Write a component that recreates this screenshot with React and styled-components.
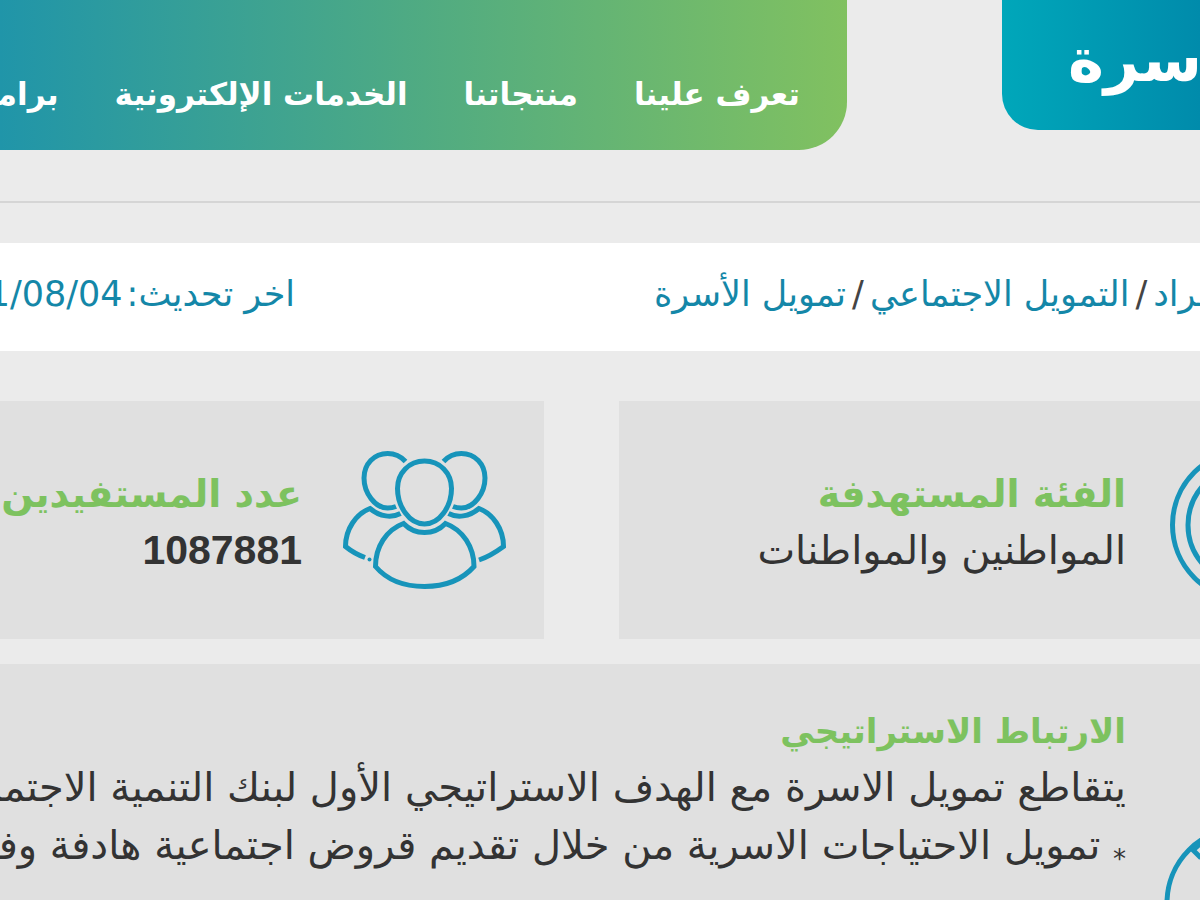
import React from "react";
import styled, { createGlobalStyle } from "styled-components";

const GlobalStyle = createGlobalStyle`
  *, *::before, *::after { box-sizing: border-box; }
  body {
    margin: 0;
    background: #ebebeb;
    color: #333;
    font-family: "DejaVu Sans", "Liberation Sans", sans-serif;
  }
`;

const Page = styled.div`
  overflow: hidden;
  min-height: 100vh;
  display: flex;
  flex-direction: column;
`;

const Header = styled.header`
  display: flex;
  align-items: flex-start;
  gap: 155px;
  padding-bottom: 51px;
  border-bottom: 2px solid #d5d5d5;
`;

const TitleTab = styled.div`
  flex: none;
  width: 198px;
  height: 130px;
  padding-left: 66px;
  display: flex;
  justify-content: flex-end;
  overflow: hidden;
  border-bottom-left-radius: 36px;
  background: linear-gradient(to right, #00a7ba, #008bab);
`;

const Title = styled.h1`
  flex: none;
  margin: 0;
  color: #fff;
  font-size: 61px;
  line-height: 120px;
  font-weight: 700;
  white-space: nowrap;
`;

const Nav = styled.nav`
  flex: 1;
  min-width: 0;
  height: 150px;
  padding: 66px 47px 0 0;
  display: flex;
  align-items: flex-start;
  gap: 56px;
  overflow: hidden;
  border-bottom-right-radius: 48px;
  background: linear-gradient(to right, #2095a9, #50ab82 50%, #81c160);
`;

const NavLink = styled.a`
  flex: none;
  color: #fff;
  font-size: 31px;
  line-height: 56px;
  font-weight: 700;
  text-decoration: none;
  white-space: nowrap;
`;

const InfoBar = styled.div`
  display: grid;
  grid-template-columns: minmax(0, 546fr) minmax(0, 654fr);
  height: 108px;
  margin-top: 40px;
  background: #fff;
  color: #1487a8;
  font-size: 35px;
  line-height: 102px;
  white-space: nowrap;
`;

const Crumbs = styled.nav`
  display: flex;
  justify-content: flex-end;
`;

const Crumb = styled.a`
  flex: none;
  color: #1487a8;
  text-decoration: none;
`;

const Slash = styled.span`
  flex: none;
  padding: 0 6px;
  color: #444;
`;

const Updated = styled.div`
  display: flex;
  gap: 4px;
  padding-right: 359px;
  overflow: hidden;
`;

const Cards = styled.main`
  flex: 1;
  display: grid;
  grid-template-columns: minmax(0, 581fr) minmax(0, 544fr);
  grid-template-rows: 238px 1fr;
  gap: 25px 75px;
  margin-top: 50px;
`;

const Card = styled.section`
  display: flex;
  align-items: center;
  gap: ${(p) => p.$gap}px;
  padding: 6px ${(p) => p.$edge || 0}px 0 0;
  overflow: hidden;
  background: #e0e0e0;
`;

const WideCard = styled(Card)`
  grid-column: 1 / -1;
  align-items: flex-start;
  padding-top: 40px;
`;

const CardText = styled.div`
  min-width: 0;
  white-space: nowrap;
`;

const Heading = styled.h2`
  margin: 0;
  color: #7dc25f;
  font-size: ${(p) => (p.$compact ? 34 : 38)}px;
  line-height: 54px;
  font-weight: 700;
`;

const Line = styled.p`
  margin: 0;
  font-size: 40px;
  line-height: 58px;
`;

const Marker = styled.span`
  font-size: 26px;
  line-height: 1;
  vertical-align: sub;
`;

const Count = styled.p`
  margin: 0;
  font-family: "Liberation Sans", sans-serif;
  font-size: 41px;
  line-height: 58px;
  font-weight: 700;
`;

const Icon = styled.svg`
  flex: none;
  display: block;
  fill: none;
  stroke: #1794ba;
  stroke-width: 5;
`;

const LowIcon = styled(Icon)`
  align-self: flex-end;
`;

const PeopleIcon = () => (
  <Icon width="166" height="146" viewBox="0 0 166 146" aria-hidden="true">
    <path d="M82.5 11C98 11 109.5 23 109.5 38.5C109.5 56 98 74 82.5 74C67 74 55.5 56 55.5 38.5C55.5 23 67 11 82.5 11Z" />
    <path d="M63.5 11.5C58.5 6 52.5 3.5 45.7 3.5C32 3.5 22 14 22 28C22 43 33 58 45.7 58C49 58 51.5 57.5 54 56.5" />
    <path d="M101.5 11.5C106.5 6 112.5 3.5 119.3 3.5C133 3.5 143 14 143 28C143 43 132 58 119.3 58C116 58 113.5 57.5 111 56.5" />
    <path d="M58.5 63.5C50 68 38 67 28 58.5C14 64 3.5 79 3.5 96.5C9 101 16 105 23 107.5" />
    <path d="M106.5 63.5C115 68 127 67 137 58.5C151 64 161.5 79 161.5 96.5C154 102 146 107 137 110" />
    <circle cx="27.5" cy="109.5" r="2" fill="#1794ba" stroke="none" />
    <path d="M61.5 73.5C73 85.5 92 85.5 103.5 73.5C121 80 132 97 132 116.5C120 130 102 136.5 82.5 136.5C63 136.5 45 130 33.5 116.5C33.5 97 44 80 61.5 73.5Z" />
  </Icon>
);

const TargetIcon = () => (
  <Icon width="32" height="160" viewBox="0 0 32 160" aria-hidden="true">
    <circle cx="79" cy="82" r="74.5" />
    <circle cx="79" cy="82" r="59" />
  </Icon>
);

const LinkIcon = () => (
  <LowIcon width="36" height="76" viewBox="0 0 36 76" aria-hidden="true">
    <circle cx="78" cy="79" r="75" />
    <path d="M27 24L37 34M29 26L37 19" />
  </LowIcon>
);

export default function App() {
  return (
    <Page dir="rtl" lang="ar">
      <GlobalStyle />
      <Header>
        <TitleTab>
          <Title>الأسرة</Title>
        </TitleTab>
        <Nav aria-label="القائمة">
          <NavLink href="#about">تعرف علينا</NavLink>
          <NavLink href="#products">منتجاتنا</NavLink>
          <NavLink href="#services">الخدمات الإلكترونية</NavLink>
          <NavLink href="#programs">برامج</NavLink>
        </Nav>
      </Header>
      <InfoBar>
        <Crumbs aria-label="المسار">
          <Crumb href="#individuals">الأفراد</Crumb>
          <Slash>/</Slash>
          <Crumb href="#social">التمويل الاجتماعي</Crumb>
          <Slash>/</Slash>
          <Crumb href="#family">تمويل الأسرة</Crumb>
        </Crumbs>
        <Updated>
          <span>اخر تحديث:</span>
          <time dateTime="2021-08-04">2021/08/04</time>
        </Updated>
      </InfoBar>
      <Cards>
        <Card $gap={42}>
          <TargetIcon />
          <CardText>
            <Heading>الفئة المستهدفة</Heading>
            <Line>المواطنين والمواطنات</Line>
          </CardText>
        </Card>
        <Card $gap={40} $edge={36}>
          <PeopleIcon />
          <CardText>
            <Heading>عدد المستفيدين</Heading>
            <Count>1087881</Count>
          </CardText>
        </Card>
        <WideCard $gap={38}>
          <LinkIcon />
          <CardText>
            <Heading $compact>الارتباط الاستراتيجي</Heading>
            <Line>يتقاطع تمويل الاسرة مع الهدف الاستراتيجي الأول لبنك التنمية الاجتماعية</Line>
            <Line>
              <Marker>*</Marker> تمويل الاحتياجات الاسرية من خلال تقديم قروض اجتماعية هادفة وفق
            </Line>
          </CardText>
        </WideCard>
      </Cards>
    </Page>
  );
}
